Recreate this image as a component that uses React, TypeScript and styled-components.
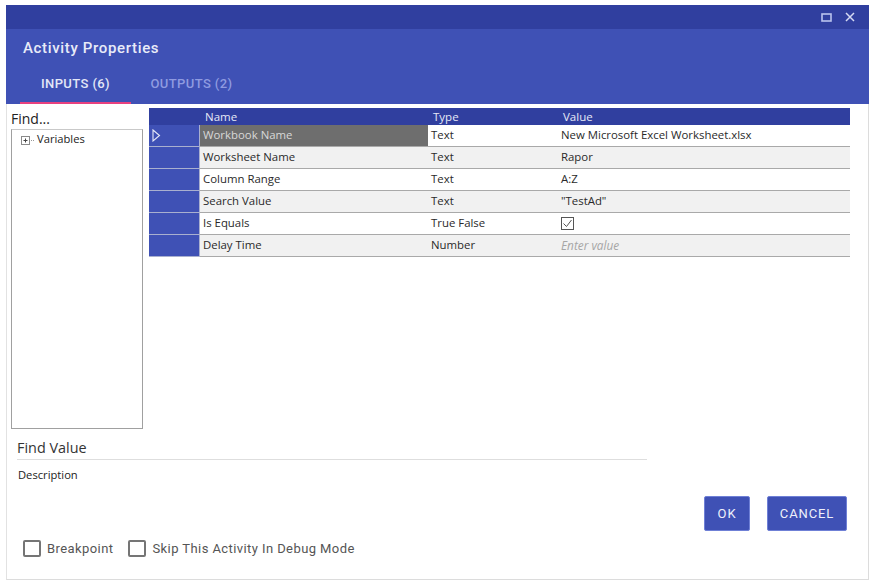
import React from 'react';
import styled, { createGlobalStyle } from 'styled-components';

const GlobalStyle = createGlobalStyle`
  html, body {
    margin: 0;
    padding: 0;
    background: #fff;
  }
  body {
    font-family: 'Open Sans', 'Noto Sans', sans-serif;
    color: #222;
  }
`;

const Page = styled.div`
  width: 875px;
  height: 588px;
  padding: 5px 6px 8px 6px;
  box-sizing: border-box;
`;

const Dialog = styled.div`
  width: 863px;
  height: 575px;
  box-sizing: border-box;
  border: 1px solid #dcdcdc;
  border-top: none;
  border-left: 1px solid #e2e2e2;
  display: flex;
  flex-direction: column;
`;

const TitleBar = styled.div`
  height: 24px;
  margin: 0 -1px 0 -1px;
  background: #303f9f;
  display: flex;
  align-items: center;
  justify-content: flex-end;
  gap: 13px;
  padding-right: 14px;
`;

const Header = styled.div`
  height: 75px;
  margin: 0 -1px;
  background: #3f51b5;
  display: flex;
  flex-direction: column;
  justify-content: space-between;
  font-family: Roboto, sans-serif;
`;

const Title = styled.div`
  padding: 10px 0 0 17px;
  font-size: 15px;
  line-height: 18px;
  font-weight: 500;
  letter-spacing: 0.65px;
  color: #e8ebf8;
`;

const Tabs = styled.div`
  display: flex;
  padding-left: 14px;
`;

const Tab = styled.div<{ $active?: boolean }>`
  width: ${p => (p.$active ? '111px' : '121px')};
  height: 39px;
  box-sizing: border-box;
  padding-top: 11px;
  text-align: center;
  font-size: 13px;
  line-height: 15px;
  font-weight: 500;
  letter-spacing: 0.4px;
  color: ${p => (p.$active ? '#e3e7f7' : '#8f9be0')};
  border-bottom: 2px solid ${p => (p.$active ? '#e8407f' : 'transparent')};
`;

const Main = styled.div`
  display: flex;
  height: 325px;
  padding-left: 4px;
`;

const Side = styled.div`
  width: 132px;
  display: flex;
  flex-direction: column;
`;

const FindLabel = styled.div`
  font-size: 14px;
  line-height: 19px;
  height: 25px;
  padding-top: 5px;
  box-sizing: border-box;
  color: #222;
`;

const TreeBox = styled.div`
  flex: 1;
  border: 1px solid #a0a0a0;
  border-top-color: #c9c9c9;
  padding: 1px 0 0 9px;
  display: flex;
  align-items: flex-start;
  font-size: 11.2px;
  line-height: 16px;
`;

const TreeToggle = styled.svg`
  width: 16px;
  height: 10px;
  margin-top: 5px;
  flex: none;
`;

const GridArea = styled.div`
  margin: 4px 0 0 6px;
  width: 701px;
`;

const GridRow = styled.div`
  display: grid;
  grid-template-columns: 51px 228px 130px 292px;
`;

const HeaderRow = styled(GridRow)`
  height: 17px;
  background: #303f9f;
  color: #e6e9f7;
  font-size: 11.5px;
  line-height: 18px;
`;

const HeaderCell = styled.div<{ $indent: number }>`
  padding-left: ${p => p.$indent}px;
`;

const DataRow = styled(GridRow)`
  height: 22px;
  box-sizing: border-box;
  border-bottom: 1px solid #a9a9a9;
  font-size: 11.4px;
  line-height: 20px;
`;

const RowHead = styled.div`
  background: #3f51b5;
  border-right: 1px solid #a9b0cf;
  margin-bottom: -1px;
  border-bottom: 1px solid #a9b0cf;
  display: flex;
  align-items: center;
  padding-left: 3px;
`;

const Cell = styled.div<{ $alt?: boolean; $selected?: boolean; $indent?: number }>`
  padding-left: ${p => p.$indent ?? 3}px;
  padding-bottom: 1px;
  background: ${p => (p.$selected ? '#6e6e6e' : p.$alt ? '#f1f1f1' : '#fff')};
  color: ${p => (p.$selected ? '#d8d8d8' : '#2a2a2a')};
  white-space: nowrap;
  display: flex;
  align-items: center;
`;

const Placeholder = styled.span`
  color: #a6a6a6;
  font-size: 11.8px;
  font-style: italic;
`;

const Bottom = styled.div`
  flex: 1;
  display: grid;
  grid-template-columns: 1fr 200px;
  padding-left: 10px;
`;

const InfoColumn = styled.div`
  display: flex;
  flex-direction: column;
`;

const ValueTitle = styled.div`
  width: 630px;
  margin-top: 9px;
  height: 21px;
  font-size: 14.4px;
  line-height: 20px;
  color: #333;
  border-bottom: 1px solid #dedede;
`;

const Description = styled.div`
  margin: 7px 0 0 1px;
  font-size: 11.2px;
  line-height: 16px;
  color: #222;
`;

const CheckRow = styled.div`
  display: flex;
  align-items: center;
  margin: 57px 0 0 6px;
  font-family: Roboto, sans-serif;
  font-size: 13px;
  letter-spacing: 0.42px;
  color: #555;
  white-space: nowrap;
`;

const CheckLabel = styled.label`
  display: flex;
  align-items: center;
  gap: 6px;
  margin-right: 15px;
`;

const CheckBox = styled.span`
  width: 18px;
  height: 17px;
  box-sizing: border-box;
  border: 2px solid #757575;
  border-radius: 2px;
`;

const Actions = styled.div`
  display: flex;
  justify-content: flex-end;
  gap: 17px;
  padding: 67px 21px 0 0;
  align-items: flex-start;
`;

const ActionButton = styled.button<{ $width: number }>`
  width: ${p => p.$width}px;
  height: 35px;
  border: 1px solid #6f80d6;
  border-radius: 2px;
  background: #3f51b5;
  color: #eef0fb;
  font-family: Roboto, sans-serif;
  font-size: 13px;
  font-weight: 400;
  letter-spacing: 0.9px;
  padding: 0;
`;

const rows = [
  { name: 'Workbook Name', type: 'Text', value: 'New Microsoft Excel Worksheet.xlsx' },
  { name: 'Worksheet Name', type: 'Text', value: 'Rapor' },
  { name: 'Column Range', type: 'Text', value: 'A:Z' },
  { name: 'Search Value', type: 'Text', value: '"TestAd"' },
  { name: 'Is Equals', type: 'True False', value: 'check' },
  { name: 'Delay Time', type: 'Number', value: '' },
];

const MaximizeIcon = () => (
  <svg width="11" height="9" viewBox="0 0 11 9">
    <rect x="1" y="1" width="9" height="7" fill="none" stroke="#b9c3ee" strokeWidth="1.6" />
  </svg>
);

const CloseIcon = () => (
  <svg width="10" height="10" viewBox="0 0 10 10">
    <path d="M1 1l8 8M9 1l-8 8" stroke="#d5daf3" strokeWidth="1.5" fill="none" />
  </svg>
);

const RowArrow = () => (
  <svg width="9" height="13" viewBox="0 0 9 13">
    <path d="M1 1l6.5 5.5L1 12z" fill="none" stroke="#e6e9f7" strokeWidth="1.1" />
  </svg>
);

const TickBox = () => (
  <svg width="13" height="13" viewBox="0 0 13 13">
    <rect x="0.5" y="0.5" width="12" height="12" fill="#fff" stroke="#555" />
    <path d="M2.5 6.5l3 3 5-6.5" fill="none" stroke="#555" />
  </svg>
);

const App: React.FC = () => (
  <Page>
    <GlobalStyle />
    <Dialog>
      <TitleBar>
        <MaximizeIcon />
        <CloseIcon />
      </TitleBar>
      <Header>
        <Title>Activity Properties</Title>
        <Tabs>
          <Tab $active>INPUTS (6)</Tab>
          <Tab>OUTPUTS (2)</Tab>
        </Tabs>
      </Header>
      <Main>
        <Side>
          <FindLabel>Find...</FindLabel>
          <TreeBox>
            <TreeToggle viewBox="0 0 16 10">
              <rect x="0.5" y="0.5" width="8" height="8" fill="none" stroke="#8a8a8a" />
              <path d="M2.5 4.5h4M4.5 2.5v4" stroke="#444" />
              <path d="M10 4.5h1M12 4.5h1" stroke="#999" />
            </TreeToggle>
            Variables
          </TreeBox>
        </Side>
        <GridArea>
          <HeaderRow>
            <div />
            <HeaderCell $indent={5}>Name</HeaderCell>
            <HeaderCell $indent={5}>Type</HeaderCell>
            <HeaderCell $indent={5}>Value</HeaderCell>
          </HeaderRow>
          {rows.map((row, i) => (
            <DataRow key={row.name}>
              <RowHead>{i === 0 && <RowArrow />}</RowHead>
              <Cell $alt={i % 2 === 1} $selected={i === 0}>{row.name}</Cell>
              <Cell $alt={i % 2 === 1}>{row.type}</Cell>
              <Cell $alt={i % 2 === 1}>
                {row.value === 'check' ? (
                  <TickBox />
                ) : row.value ? (
                  row.value
                ) : (
                  <Placeholder>Enter value</Placeholder>
                )}
              </Cell>
            </DataRow>
          ))}
        </GridArea>
      </Main>
      <Bottom>
        <InfoColumn>
          <ValueTitle>Find Value</ValueTitle>
          <Description>Description</Description>
          <CheckRow>
            <CheckLabel><CheckBox />Breakpoint</CheckLabel>
            <CheckLabel><CheckBox />Skip This Activity In Debug Mode</CheckLabel>
          </CheckRow>
        </InfoColumn>
        <Actions>
          <ActionButton $width={46}>OK</ActionButton>
          <ActionButton $width={80}>CANCEL</ActionButton>
        </Actions>
      </Bottom>
    </Dialog>
  </Page>
);

export default App;
